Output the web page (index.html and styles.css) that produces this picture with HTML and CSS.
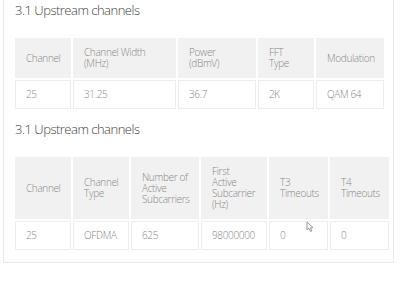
FILE: index.html
```html
<!DOCTYPE html>
<html lang="en">
<head>
<meta charset="utf-8">
<title>Upstream channels</title>
<link rel="stylesheet" href="styles.css">
</head>
<body>
<div class="card">
  <h3 class="title">3.1 Upstream channels</h3>
  <table class="grid grid-a">
    <colgroup><col style="width:56px"><col style="width:103px"><col style="width:78px"><col style="width:56px"><col style="width:68px"></colgroup>
    <thead>
      <tr><th>Channel</th><th>Channel Width<br>(MHz)</th><th>Power<br>(dBmV)</th><th>FFT<br>Type</th><th>Modulation</th></tr>
    </thead>
    <tbody>
      <tr><td>25</td><td>31.25</td><td>36.7</td><td>2K</td><td>QAM 64</td></tr>
    </tbody>
  </table>
  <h3 class="title">3.1 Upstream channels</h3>
  <table class="grid grid-b">
    <colgroup><col style="width:56px"><col style="width:56px"><col style="width:68px"><col style="width:66px"><col style="width:59px"><col style="width:59px"></colgroup>
    <thead>
      <tr><th>Channel</th><th>Channel<br>Type</th><th>Number of<br>Active<br>Subcarriers</th><th>First<br>Active<br>Subcarrier<br>(Hz)</th><th>T3<br>Timeouts</th><th>T4<br>Timeouts</th></tr>
    </thead>
    <tbody>
      <tr><td>25</td><td>OFDMA</td><td>625</td><td>98000000</td><td>0</td><td>0</td></tr>
    </tbody>
  </table>
</div>
<svg class="cursor" width="9" height="12" viewBox="0 0 9 12" aria-hidden="true">
  <path d="M1 1 L1 9 L3 7.3 L4.6 10.6 L5.9 10 L4.4 6.8 L7 6.6 Z" fill="#fff" stroke="#9a9a9a" stroke-width="1"/>
</svg>
</body>
</html>
```
FILE: styles.css
```css
html, body {
  margin: 0;
  padding: 0;
  background: #ffffff;
}
body {
  font-family: "Open Sans", Lato, sans-serif;
  font-stretch: 88%;
  position: relative;
  width: 400px;
  height: 281px;
  overflow: hidden;
}
.card {
  margin-left: 3px;
  width: 391px;
  border: 1px solid #e9e9e9;
  border-top: none;
  padding: 0 11px 12px 11px;
  box-sizing: border-box;
}
.title {
  margin: 0 0 18px 0;
  font-size: 13px;
  line-height: 20px;
  font-weight: 350;
  letter-spacing: -0.5px;
  color: #404040;
  white-space: nowrap;
}
.grid {
  border-collapse: separate;
  border-spacing: 2px;
  margin: -2px 0 -2px -2px;
  table-layout: fixed;
  font-size: 10px;
  line-height: 11px;
  letter-spacing: -0.35px;
  color: #888888;
}
.grid-a {
  width: 373px;
  margin-bottom: 8px;
}
.grid-b {
  width: 378px;
}
.grid th,
.grid td {
  border: 1px solid #ededed;
  padding: 8px 10px;
  text-align: left;
  vertical-align: middle;
  font-weight: 350;
  white-space: nowrap;
}
.grid th {
  background: #f1f1f1;
  border-color: #f1f1f1;
}
.grid td {
  background: #ffffff;
}
.cursor {
  position: absolute;
  left: 306px;
  top: 221px;
}
```
